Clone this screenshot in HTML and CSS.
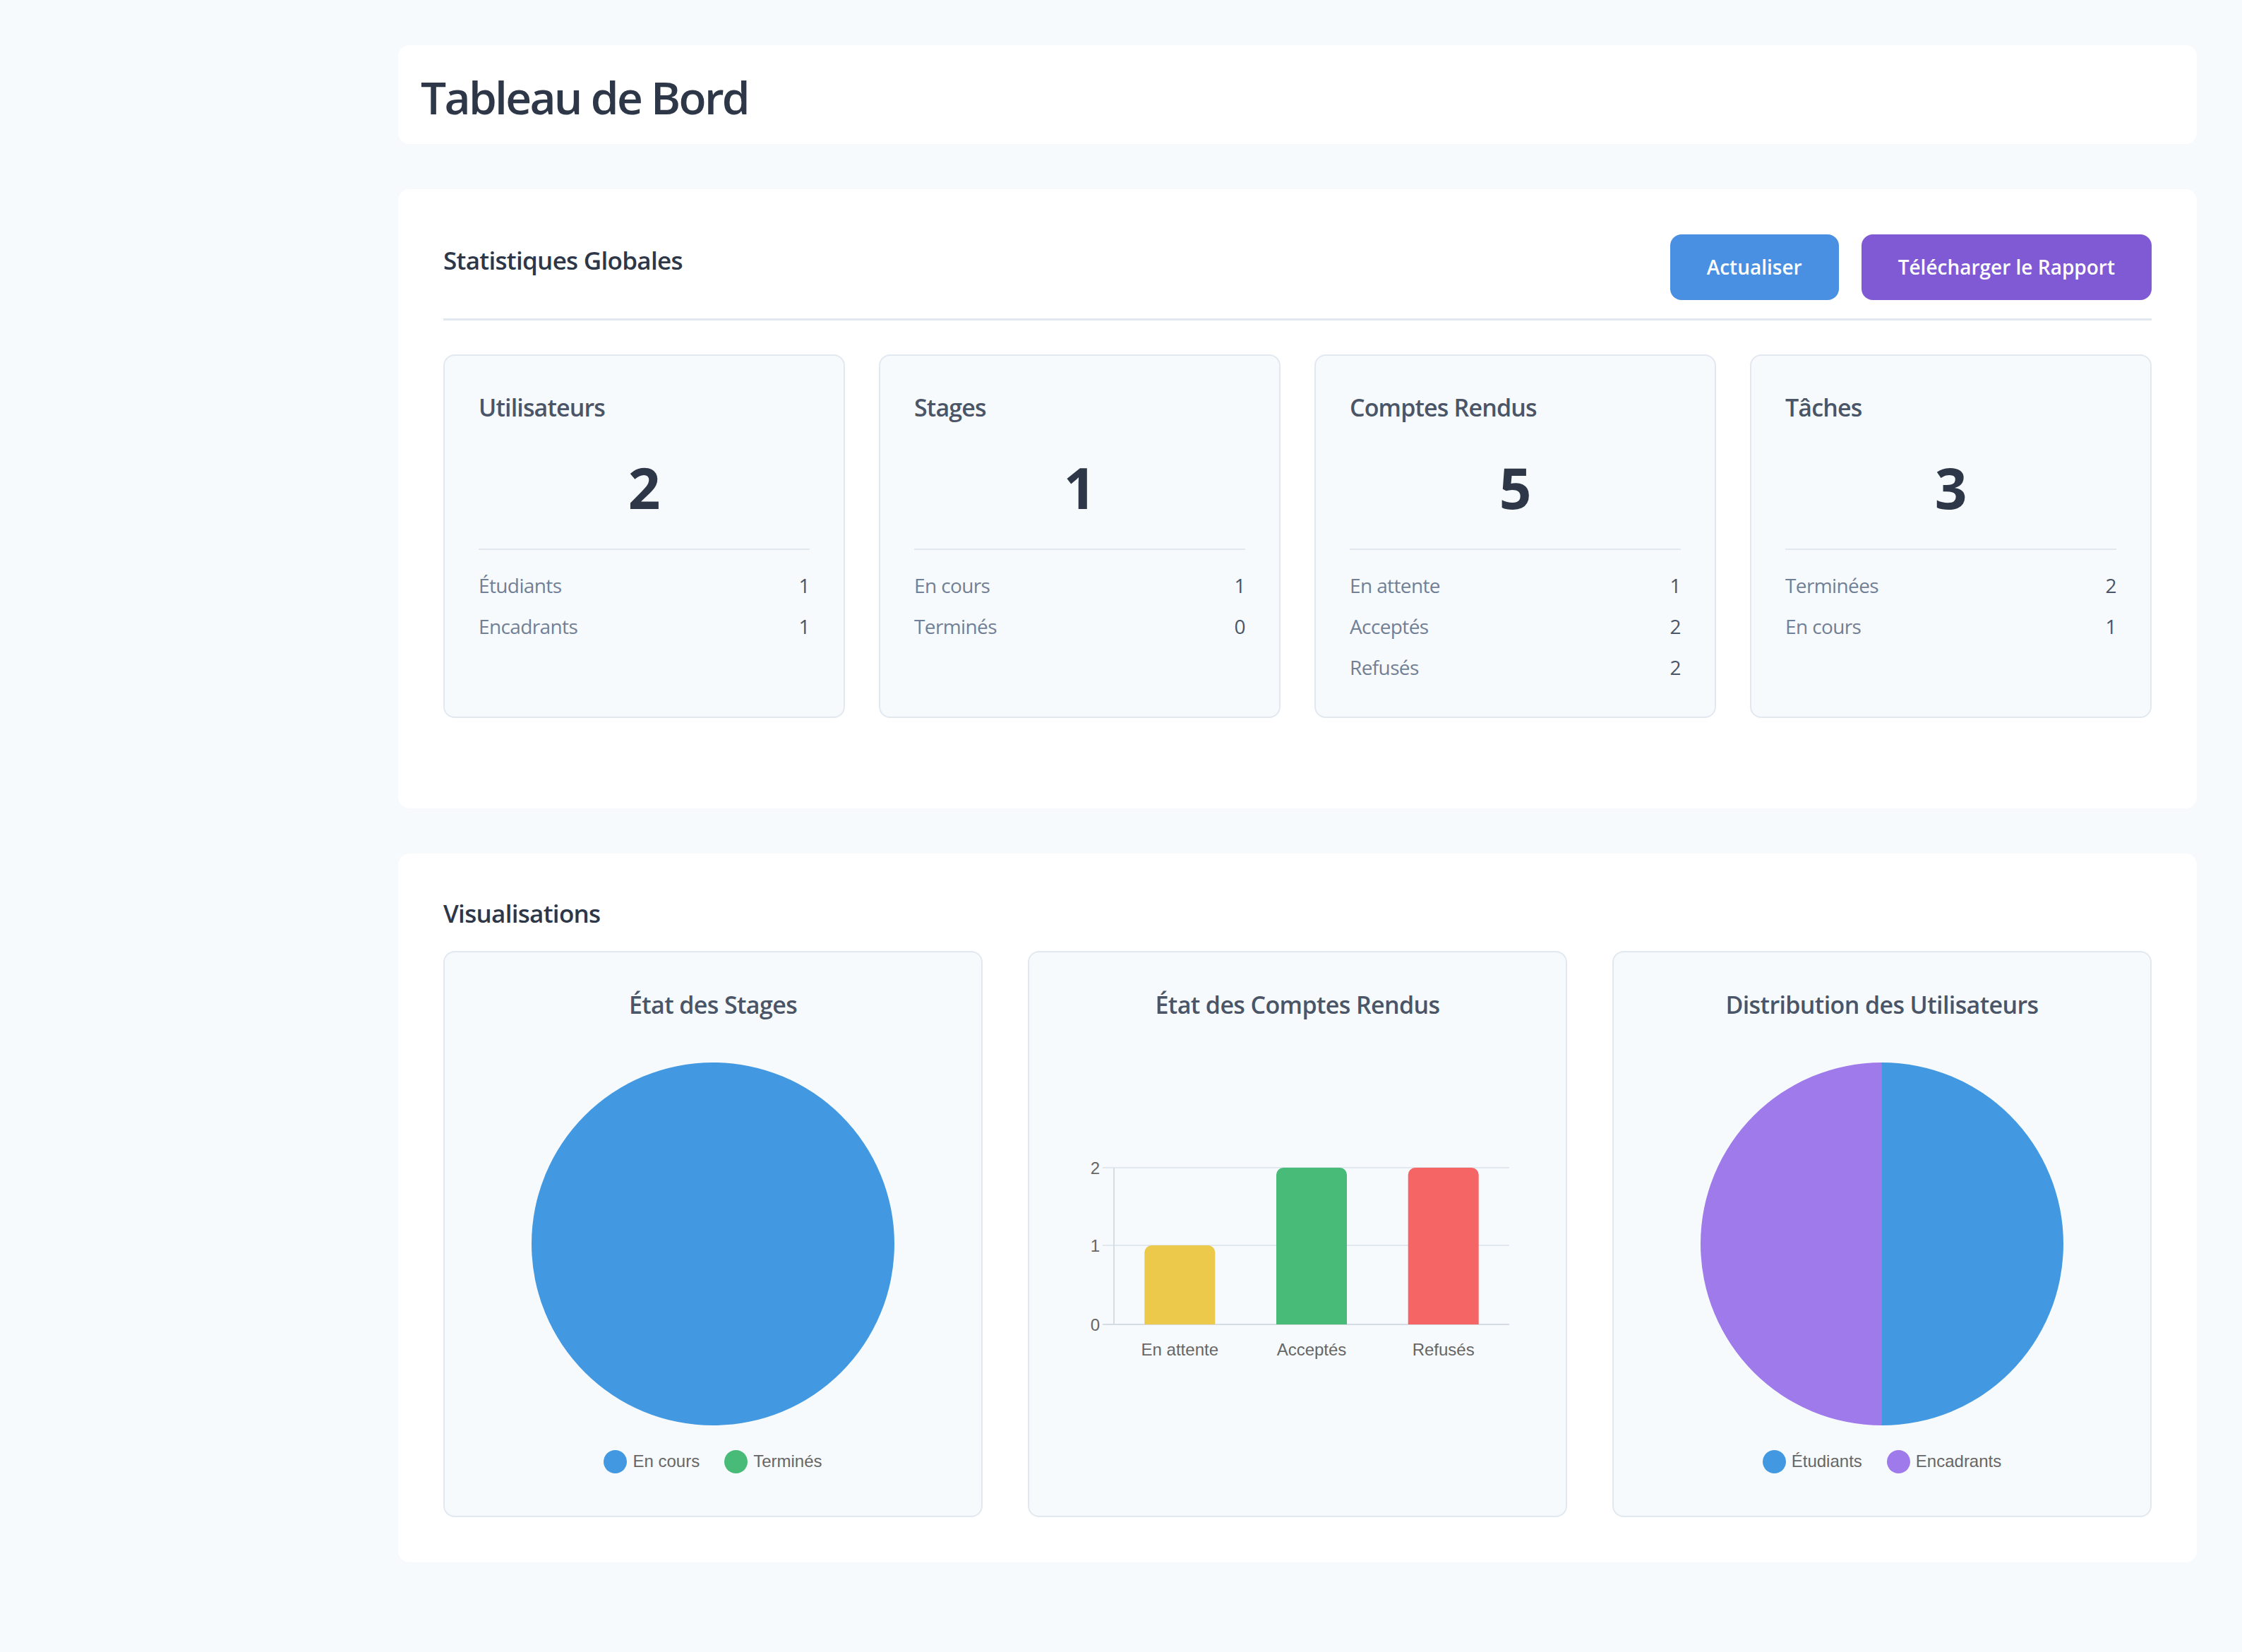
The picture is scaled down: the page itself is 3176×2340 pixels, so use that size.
FILE: index.html
```html
<!DOCTYPE html>
<html lang="fr">
<head>
<meta charset="utf-8">
<title>Tableau de Bord</title>
<link rel="stylesheet" href="styles.css">
</head>
<body>
<div class="layout">
  <aside class="sidebar"></aside>
  <main class="main">
    <header class="page-header">
      <h1>Tableau de Bord</h1>
    </header>

    <section class="panel panel-stats">
      <div class="panel-head">
        <h2 class="panel-title">Statistiques Globales</h2>
        <div class="actions">
          <button class="btn btn-blue">Actualiser</button>
          <button class="btn btn-purple">Télécharger le Rapport</button>
        </div>
      </div>
      <div class="stat-grid">
        <div class="stat-card">
          <h3 class="stat-title">Utilisateurs</h3>
          <div class="stat-number">2</div>
          <div class="stat-rows">
            <div class="stat-row"><span class="lbl">Étudiants</span><span class="val">1</span></div>
            <div class="stat-row"><span class="lbl">Encadrants</span><span class="val">1</span></div>
          </div>
        </div>
        <div class="stat-card">
          <h3 class="stat-title">Stages</h3>
          <div class="stat-number">1</div>
          <div class="stat-rows">
            <div class="stat-row"><span class="lbl">En cours</span><span class="val">1</span></div>
            <div class="stat-row"><span class="lbl">Terminés</span><span class="val">0</span></div>
          </div>
        </div>
        <div class="stat-card">
          <h3 class="stat-title">Comptes Rendus</h3>
          <div class="stat-number">5</div>
          <div class="stat-rows">
            <div class="stat-row"><span class="lbl">En attente</span><span class="val">1</span></div>
            <div class="stat-row"><span class="lbl">Acceptés</span><span class="val">2</span></div>
            <div class="stat-row"><span class="lbl">Refusés</span><span class="val">2</span></div>
          </div>
        </div>
        <div class="stat-card">
          <h3 class="stat-title">Tâches</h3>
          <div class="stat-number">3</div>
          <div class="stat-rows">
            <div class="stat-row"><span class="lbl">Terminées</span><span class="val">2</span></div>
            <div class="stat-row"><span class="lbl">En cours</span><span class="val">1</span></div>
          </div>
        </div>
      </div>
    </section>

    <section class="panel panel-vis">
      <h2 class="panel-title vis-title">Visualisations</h2>
      <div class="chart-grid">
        <div class="chart-card">
          <h3 class="chart-title">État des Stages</h3>
          <div class="chart-body">
            <svg class="pie" width="520" height="520" viewBox="0 0 520 520">
              <circle cx="260" cy="260" r="257" fill="#4299e1"/>
            </svg>
            <div class="legend">
              <span class="legend-item"><span class="dot dot-blue"></span>En cours</span>
              <span class="legend-item"><span class="dot dot-green"></span>Terminés</span>
            </div>
          </div>
        </div>

        <div class="chart-card">
          <h3 class="chart-title">État des Comptes Rendus</h3>
          <div class="chart-body">
            <svg class="bars" width="664" height="628" viewBox="0 0 664 628">
              <g class="grid">
                <line x1="56" y1="185" x2="632" y2="185"/>
                <line x1="56" y1="295" x2="632" y2="295"/>
              </g>
              <line class="axis" x1="72" y1="185" x2="72" y2="407"/>
              <line class="axis" x1="56" y1="407" x2="632" y2="407"/>
              <g class="ticks">
                <text x="52" y="193.5">2</text>
                <text x="52" y="303.5">1</text>
                <text x="52" y="415.5">0</text>
              </g>
              <path d="M115.3 407 V305 a10 10 0 0 1 10 -10 H205.3 a10 10 0 0 1 10 10 V407 Z" fill="#ecc94b"/>
              <path d="M302 407 V195 a10 10 0 0 1 10 -10 H392 a10 10 0 0 1 10 10 V407 Z" fill="#48bb78"/>
              <path d="M488.7 407 V195 a10 10 0 0 1 10 -10 H578.7 a10 10 0 0 1 10 10 V407 Z" fill="#f56565"/>
              <g class="xlabels">
                <text x="165.3" y="450.5">En attente</text>
                <text x="352" y="450.5">Acceptés</text>
                <text x="538.7" y="450.5">Refusés</text>
              </g>
            </svg>
          </div>
        </div>

        <div class="chart-card">
          <h3 class="chart-title">Distribution des Utilisateurs</h3>
          <div class="chart-body">
            <svg class="pie" width="520" height="520" viewBox="0 0 520 520">
              <path d="M260 260 V3 A257 257 0 0 1 260 517 Z" fill="#4299e1"/>
              <path d="M260 260 V517 A257 257 0 0 1 260 3 Z" fill="#9f7aea"/>
            </svg>
            <div class="legend">
              <span class="legend-item"><span class="dot dot-blue"></span>Étudiants</span>
              <span class="legend-item"><span class="dot dot-purple"></span>Encadrants</span>
            </div>
          </div>
        </div>
      </div>
    </section>
  </main>
</div>
</body>
</html>
```

FILE: styles.css
```css
* {
  box-sizing: border-box;
}

body {
  margin: 0;
  background: #f7fafc;
  font-family: "Open Sans", "Noto Sans", sans-serif;
  color: #2d3748;
}

.layout {
  display: flex;
  min-height: 100vh;
}

.sidebar {
  width: 500px;
  flex-shrink: 0;
}

.main {
  flex: 1;
  padding: 64px;
  display: flex;
  flex-direction: column;
  gap: 64px;
}

.page-header {
  background: #fff;
  border-radius: 16px;
  padding: 36px 32px 28px;
}

.page-header h1 {
  margin: 0;
  font-size: 64px;
  line-height: 76px;
  font-weight: 600;
  color: #2d3748;
  letter-spacing: -0.042em;
}

.panel {
  background: #fff;
  border-radius: 16px;
  padding: 64px;
}

.panel-head {
  display: flex;
  justify-content: space-between;
  align-items: center;
  padding-bottom: 26px;
  border-bottom: 3px solid #e2e8f0;
  margin-bottom: 48px;
}

.panel-title {
  margin: 0;
  font-size: 35px;
  line-height: 42px;
  font-weight: 600;
  color: #2d3748;
  letter-spacing: -0.02em;
}

.panel-head .panel-title {
  margin-bottom: 20px;
}

.actions {
  display: flex;
  gap: 32px;
}

.btn {
  border: none;
  border-radius: 16px;
  padding: 24px 52px;
  font-family: inherit;
  font-size: 28px;
  line-height: 45px;
  font-weight: 600;
  color: #fff;
  cursor: pointer;
}

.btn-blue {
  background: #4a90e2;
}

.btn-purple {
  background: #805ad5;
}

.stat-grid {
  display: grid;
  grid-template-columns: repeat(4, 1fr);
  gap: 48px;
  margin-bottom: 64px;
}

.stat-card {
  background: #f7fafc;
  border: 2px solid #e2e8f0;
  border-radius: 16px;
  padding: 52px 48px 49px;
}

.stat-title {
  margin: 0 0 44px;
  font-size: 34px;
  line-height: 42px;
  font-weight: 600;
  color: #4a5568;
  letter-spacing: -0.025em;
}

.stat-number {
  text-align: center;
  font-size: 80px;
  line-height: 96px;
  font-weight: 700;
  color: #2d3748;
  margin-bottom: 39px;
}

.stat-rows {
  border-top: 2px solid #e2e8f0;
  padding-top: 29px;
  display: flex;
  flex-direction: column;
  gap: 16px;
}

.stat-row {
  display: flex;
  justify-content: space-between;
  font-size: 28px;
  line-height: 42px;
  letter-spacing: -0.022em;
}

.lbl {
  color: #718096;
}

.val {
  color: #4a5568;
  font-weight: 500;
}

.vis-title {
  margin-bottom: 32px;
}

.chart-grid {
  display: grid;
  grid-template-columns: repeat(3, 1fr);
  gap: 64px;
}

.chart-card {
  background: #f7fafc;
  border: 2px solid #e2e8f0;
  border-radius: 16px;
  padding: 50px 48px 50px;
}

.chart-title {
  margin: 0 0 22px;
  text-align: center;
  font-size: 34px;
  line-height: 48px;
  font-weight: 600;
  color: #4a5568;
  letter-spacing: -0.018em;
}

.chart-body {
  height: 628px;
  display: flex;
  flex-direction: column;
  align-items: center;
}

.pie {
  display: block;
  margin-top: 33px;
}

.legend {
  margin-top: 31px;
  display: flex;
  gap: 35px;
  font-family: "Liberation Sans", Arial, sans-serif;
  font-size: 24px;
  line-height: 34px;
  color: #666;
}

.legend-item {
  display: flex;
  align-items: center;
  gap: 8px;
}

.dot {
  width: 33px;
  height: 33px;
  border-radius: 50%;
  display: inline-block;
}

.dot-blue {
  background: #4299e1;
}

.dot-green {
  background: #48bb78;
}

.dot-purple {
  background: #9f7aea;
}

.bars {
  display: block;
}

.bars .grid line {
  stroke: #e2e8f0;
  stroke-width: 2;
}

.bars .axis {
  stroke: #d6dce4;
  stroke-width: 2;
}

.bars text {
  font-family: "Liberation Sans", Arial, sans-serif;
  font-size: 24px;
  fill: #666;
}

.bars .ticks text {
  text-anchor: end;
}

.bars .xlabels text {
  text-anchor: middle;
}
```
